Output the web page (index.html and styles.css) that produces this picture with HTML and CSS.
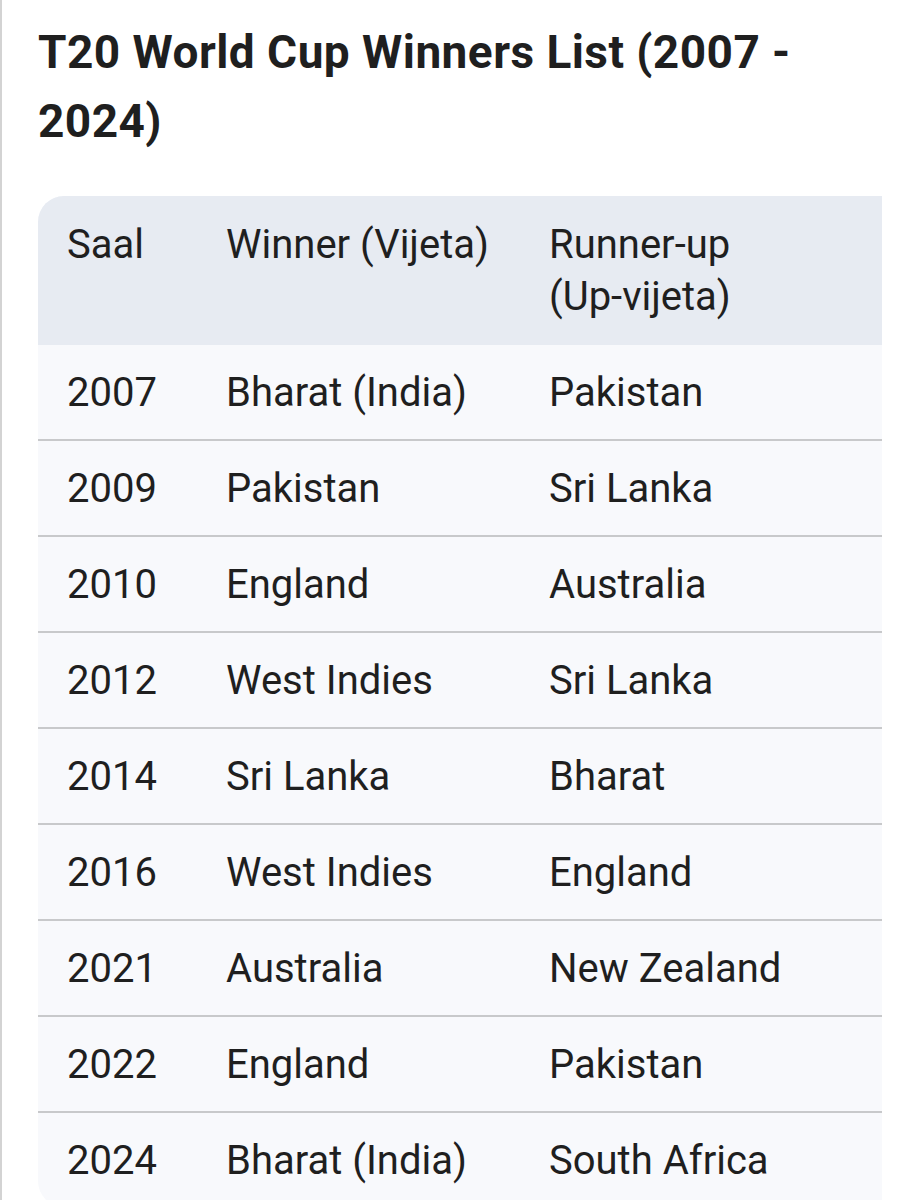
FILE: index.html
```html
<!DOCTYPE html>
<html>
<head>
<meta charset="utf-8">
<link rel="stylesheet" href="styles.css">
</head>
<body>
<div class="page">
  <h1 class="title">T20 World Cup Winners List (2007 - 2024)</h1>
  <div class="table-wrap">
    <table class="winners">
      <colgroup>
        <col class="c-year">
        <col class="c-win">
        <col class="c-run">
      </colgroup>
      <thead>
        <tr><th>Saal</th><th>Winner (Vijeta)</th><th><span class="nw">Runner-up</span> <span class="nw">(Up-vijeta)</span></th></tr>
      </thead>
      <tbody>
        <tr><td>2007</td><td>Bharat (India)</td><td>Pakistan</td></tr>
        <tr><td>2009</td><td>Pakistan</td><td>Sri Lanka</td></tr>
        <tr><td>2010</td><td>England</td><td>Australia</td></tr>
        <tr><td>2012</td><td>West Indies</td><td>Sri Lanka</td></tr>
        <tr><td>2014</td><td>Sri Lanka</td><td>Bharat</td></tr>
        <tr><td>2016</td><td>West Indies</td><td>England</td></tr>
        <tr><td>2021</td><td>Australia</td><td>New Zealand</td></tr>
        <tr><td>2022</td><td>England</td><td>Pakistan</td></tr>
        <tr><td>2024</td><td>Bharat (India)</td><td>South Africa</td></tr>
      </tbody>
    </table>
  </div>
</div>
</body>
</html>
```

FILE: styles.css
```css
html, body {
  margin: 0;
  padding: 0;
  background: #ffffff;
}
body {
  font-family: Roboto, "Liberation Sans", sans-serif;
  color: #1f1f1f;
}
.page {
  border-left: 2px solid #d3d3d3;
  min-height: 1200px;
  padding: 18px 28px 0 36px;
  box-sizing: border-box;
}
.title {
  margin: 0 0 40px 0;
  font-size: 46px;
  line-height: 69px;
  font-weight: 700;
  letter-spacing: 0.45px;
  color: #1f1f1f;
  max-width: 800px;
}
.table-wrap {
  width: 844px;
  overflow: hidden;
  border-radius: 26px 0 0 26px;
  background: #f8f9fc;
}
.winners {
  width: 844px;
  border-collapse: collapse;
  table-layout: fixed;
  font-size: 40px;
  line-height: 52px;
}
.c-year { width: 159px; }
.c-win { width: 323px; }
.c-run { width: 362px; }
.winners th {
  background: #e7ebf2;
  font-weight: 400;
  text-align: left;
  vertical-align: top;
  padding: 23px 29px 22px 29px;
}
.nw {
  white-space: nowrap;
}
.winners td {
  padding: 22px 29px 20px 29px;
  border-top: 2px solid #c8c9cb;
}
.winners tbody tr:first-child td {
  border-top: none;
}
```
